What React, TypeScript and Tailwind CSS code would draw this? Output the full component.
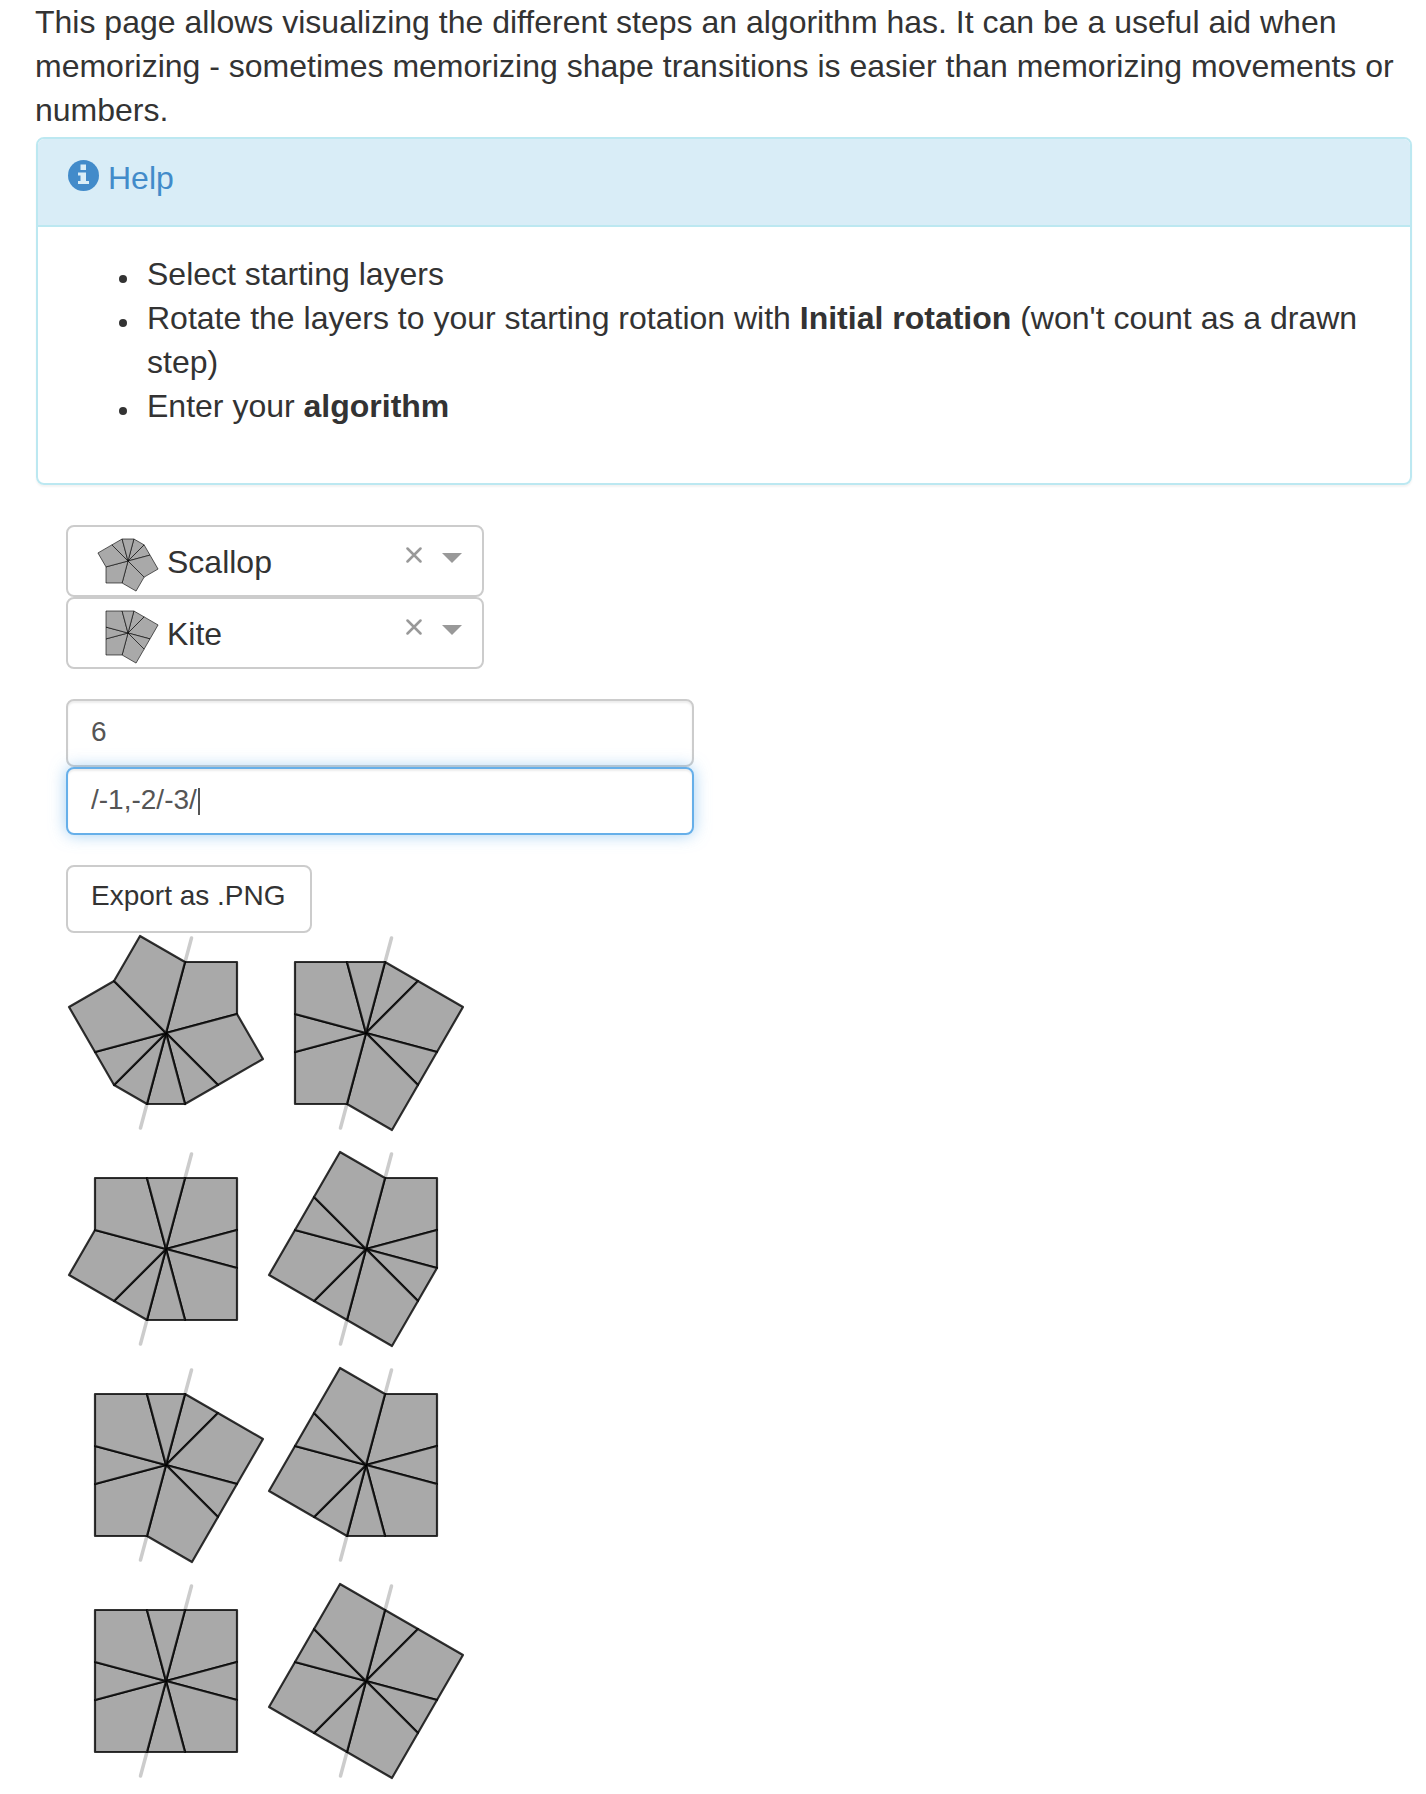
import React, { useEffect, useRef, useState } from "react";

const SLICE = Math.PI / 12;
const HALF_SIDE = 71;
const EDGE_RADIUS = HALF_SIDE / Math.cos(SLICE);
const CORNER_RADIUS = HALF_SIDE * Math.SQRT2;

function point(radius: number, slices: number) {
  const x = radius * Math.sin(slices * SLICE);
  const y = -radius * Math.cos(slices * SLICE);
  return `${x.toFixed(2)},${y.toFixed(2)}`;
}

// Each layer lists its pieces clockwise from the slice line: c = corner, e = edge.
function piecePolygons(pieces: string) {
  let at = 1;
  return pieces.split("").map((piece) => {
    const start = at;
    at += piece === "c" ? 4 : 2;
    const tip = piece === "c" ? [point(CORNER_RADIUS, start + 2)] : [];
    return ["0,0", point(EDGE_RADIUS, start), ...tip, point(EDGE_RADIUS, at)].join(" ");
  });
}

function Layer({
  pieces,
  strokeWidth,
  sliceLine,
  className,
}: {
  pieces: string;
  strokeWidth: number;
  sliceLine?: boolean;
  className: string;
}) {
  return (
    <svg viewBox="-100 -100 200 200" overflow="visible" className={className} aria-hidden="true">
      {sliceLine && (
        <line x1="25.5" y1="-95" x2="-25.5" y2="95" stroke="#cccccc" strokeWidth="3.5" strokeLinecap="round" />
      )}
      {piecePolygons(pieces).map((points) => (
        <polygon
          key={points}
          points={points}
          fill="#a9a9a9"
          stroke="#000"
          strokeOpacity="0.8"
          strokeWidth={strokeWidth}
          strokeLinejoin="round"
        />
      ))}
    </svg>
  );
}

const SHAPES = [
  { name: "Scallop", pieces: "eeccccee" },
  { name: "Kite", pieces: "ececcece" },
  { name: "Square", pieces: "cececece" },
];

const STEPS = [
  ["cceeeecc", "ececcece"],
  ["ceceecce", "ceececec"],
  ["ececcece", "ceceecec"],
  ["cececece", "ecececec"],
];

const INITIAL_ALGORITHM = "/-1,-2/-3/";

function ShapeSelect({ label, initial }: { label: string; initial: string }) {
  const [value, setValue] = useState(initial);
  const shape = SHAPES.find((item) => item.name === value);
  return (
    <div className="relative w-full max-w-[418px]">
      <select
        aria-label={label}
        value={value}
        onChange={(event) => setValue(event.target.value)}
        className="block h-[72px] w-full appearance-none rounded-lg border-2 border-[#ccc] bg-white pt-0.5 pr-24 pl-[99px] text-[32px] text-[#333] outline-none"
      >
        <option value="" />
        {SHAPES.map((item) => (
          <option key={item.name}>{item.name}</option>
        ))}
      </select>
      {shape && (
        <Layer
          pieces={shape.pieces}
          strokeWidth={2.5}
          className="pointer-events-none absolute top-[5px] left-[31px] size-[62px]"
        />
      )}
      <button
        type="button"
        aria-label={`Clear ${label}`}
        onClick={() => setValue("")}
        className="absolute top-[22px] right-[62px] size-4 text-[#999]"
      >
        <svg viewBox="0 0 16 16" className="size-4" stroke="currentColor" strokeWidth="2.5" strokeLinecap="round">
          <path d="M1.500 1.500 14.500 14.500M14.500 1.500 1.500 14.500" />
        </svg>
      </button>
      <svg viewBox="0 0 20 10" className="pointer-events-none absolute top-7 right-[22px] h-[10px] w-5" fill="#999">
        <path d="M0 0h20L10 10z" />
      </svg>
    </div>
  );
}

function InfoSign() {
  return (
    <svg viewBox="0 0 31 31" className="size-[31px]" aria-hidden="true">
      <circle cx="15.5" cy="15.5" r="15.5" fill="#428bca" />
      <path d="M12.500 4.500h5.500v5.500h-5.500zM10 12.500h8v8.500h3v3h-11v-3h2.500v-5.500h-2.500z" fill="#d9edf7" />
    </svg>
  );
}

const BULLET =
  "relative before:absolute before:top-[23px] before:-left-7 before:size-2 before:rounded-full before:bg-[#333]";

export default function App() {
  const [rotation, setRotation] = useState("6");
  const [algorithm, setAlgorithm] = useState(INITIAL_ALGORITHM);
  const algorithmRef = useRef<HTMLInputElement>(null);
  const untouched = algorithm === INITIAL_ALGORITHM;

  useEffect(() => {
    const input = algorithmRef.current;
    input?.focus();
    input?.setSelectionRange(input.value.length, input.value.length);
  }, []);

  return (
    <main className="bg-white pr-[14px] pb-3 font-['Liberation_Sans',Arial,sans-serif] text-[32px] leading-[44px] text-[#333]">
      <p className="mb-[5px] pl-[35px]">
        This page allows visualizing the different steps an algorithm has. It can be a useful aid when memorizing -
        sometimes memorizing shape transitions is easier than memorizing movements or numbers.
      </p>

      <section className="ml-9 rounded-lg border-2 border-[#bce8f1] shadow-[0_2px_2px_rgba(0,0,0,0.05)]">
        <h4 className="rounded-t-md border-b-2 border-[#bce8f1] bg-[#d9edf7] px-[30px] pt-[17px] pb-[25px]">
          <a href="#help" className="flex items-start gap-[9px] text-[#428bca]">
            <span className="pt-1">
              <InfoSign />
            </span>
            Help
          </a>
        </h4>
        <ul id="help" className="pt-[25px] pr-[30px] pb-[55px] pl-[109px]">
          <li className={BULLET}>Select starting layers</li>
          <li className={BULLET}>
            Rotate the layers to your starting rotation with <strong>Initial rotation</strong> (won't count as a drawn
            step)
          </li>
          <li className={BULLET}>
            Enter your <strong>algorithm</strong>
          </li>
        </ul>
      </section>

      <div className="mt-10 pl-[66px]">
        <ShapeSelect label="Top layer" initial="Scallop" />
        <ShapeSelect label="Bottom layer" initial="Kite" />

        <div className="mt-[30px] w-full max-w-[628px] text-[28px] text-[#555]">
          <input
            type="text"
            aria-label="Initial rotation"
            value={rotation}
            onChange={(event) => setRotation(event.target.value)}
            className="block h-[68px] w-full rounded-lg border-2 border-[#ccc] bg-white px-[23px] pb-0.5 shadow-[inset_0_2px_2px_rgba(0,0,0,0.075)] outline-none"
          />
          <div className="relative">
            <input
              ref={algorithmRef}
              type="text"
              aria-label="Algorithm"
              value={algorithm}
              onChange={(event) => setAlgorithm(event.target.value)}
              className={`block h-[68px] w-full rounded-lg border-2 border-[#66afe9] bg-white px-[23px] pb-0.5 shadow-[inset_0_2px_2px_rgba(0,0,0,0.075),0_0_16px_rgba(102,175,233,0.6)] outline-none ${untouched ? "caret-transparent" : "caret-[#555]"}`}
            />
            {untouched && (
              <span className="pointer-events-none absolute top-[21px] left-[132px] h-[27px] w-0.5 bg-[#555]" />
            )}
          </div>
        </div>

        <button
          type="button"
          className="mt-[30px] block h-[68px] rounded-lg border-2 border-[#ccc] bg-white pr-6 pb-1.5 pl-[23px] text-[28px]"
        >
          Export as .PNG
        </button>

        <div className="grid w-fit grid-cols-2 gap-y-4">
          {STEPS.flatMap((step, row) =>
            step.map((pieces, side) => (
              <Layer
                key={`${row}-${side}`}
                pieces={pieces}
                strokeWidth={2.2}
                sliceLine
                className="size-[200px]"
              />
            )),
          )}
        </div>
      </div>
    </main>
  );
}
